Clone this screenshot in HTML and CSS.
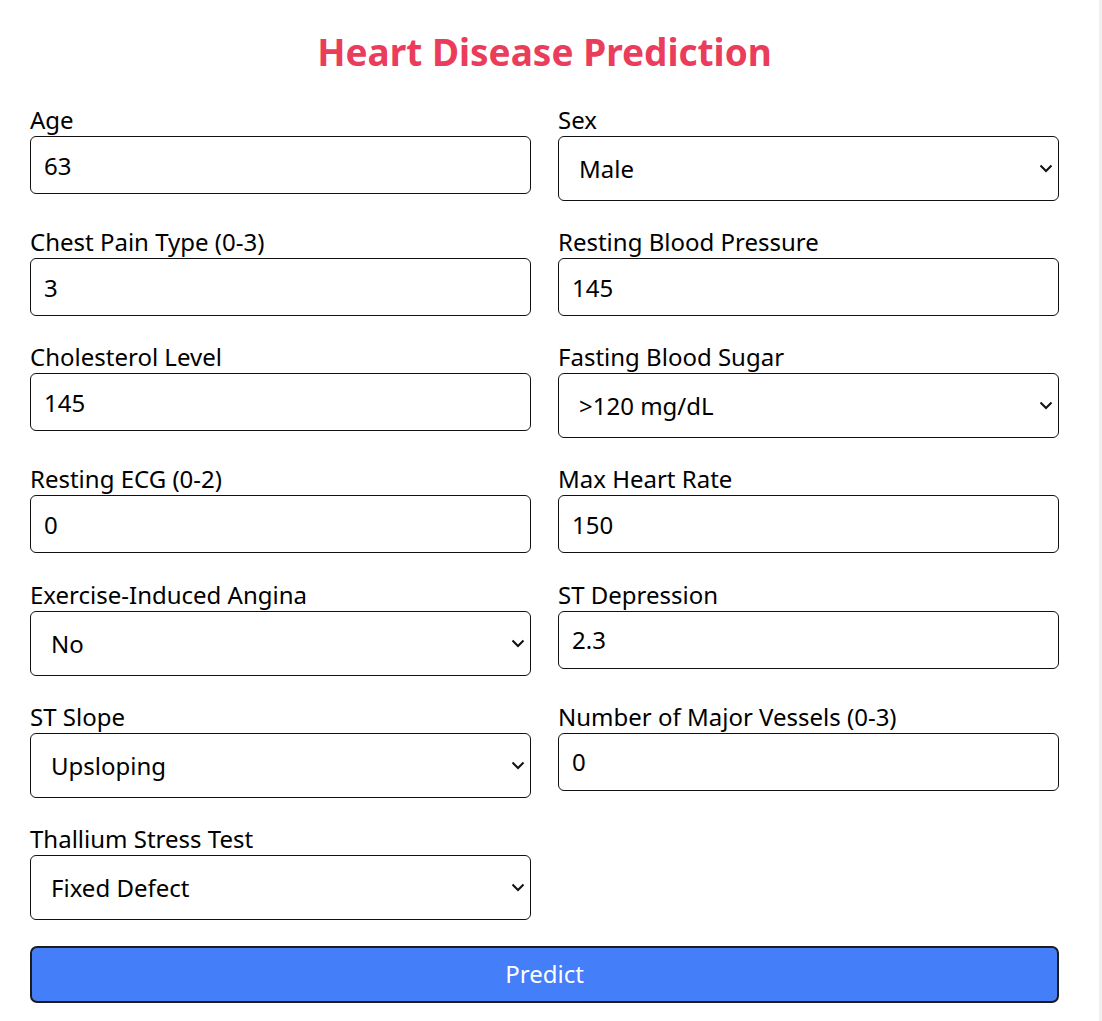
FILE: index.html
```html
<!DOCTYPE html>
<html lang="en">
<head>
<meta charset="utf-8">
<title>Heart Disease Prediction</title>
<link rel="stylesheet" href="styles.css">
</head>
<body>
<div class="page">
  <main class="content">
    <h1 class="title">Heart Disease Prediction</h1>
    <form class="form">
      <div class="field">
        <label class="label">Age</label>
        <input class="input" type="text" value="63">
      </div>
      <div class="field">
        <label class="label">Sex</label>
        <div class="select-wrap">
          <select class="select"><option>Male</option><option>Female</option></select>
          <svg class="chev" width="14" height="9" viewBox="0 0 14 9"><path d="M1.5 1.5 L7 7 L12.5 1.5" fill="none" stroke="#111" stroke-width="2"/></svg>
        </div>
      </div>
      <div class="field">
        <label class="label">Chest Pain Type (0-3)</label>
        <input class="input" type="text" value="3">
      </div>
      <div class="field">
        <label class="label">Resting Blood Pressure</label>
        <input class="input" type="text" value="145">
      </div>
      <div class="field">
        <label class="label">Cholesterol Level</label>
        <input class="input" type="text" value="145">
      </div>
      <div class="field">
        <label class="label">Fasting Blood Sugar</label>
        <div class="select-wrap">
          <select class="select"><option>&gt;120 mg/dL</option><option>&lt;=120 mg/dL</option></select>
          <svg class="chev" width="14" height="9" viewBox="0 0 14 9"><path d="M1.5 1.5 L7 7 L12.5 1.5" fill="none" stroke="#111" stroke-width="2"/></svg>
        </div>
      </div>
      <div class="field">
        <label class="label">Resting ECG (0-2)</label>
        <input class="input" type="text" value="0">
      </div>
      <div class="field">
        <label class="label">Max Heart Rate</label>
        <input class="input" type="text" value="150">
      </div>
      <div class="field">
        <label class="label">Exercise-Induced Angina</label>
        <div class="select-wrap">
          <select class="select"><option>No</option><option>Yes</option></select>
          <svg class="chev" width="14" height="9" viewBox="0 0 14 9"><path d="M1.5 1.5 L7 7 L12.5 1.5" fill="none" stroke="#111" stroke-width="2"/></svg>
        </div>
      </div>
      <div class="field">
        <label class="label">ST Depression</label>
        <input class="input" type="text" value="2.3">
      </div>
      <div class="field">
        <label class="label">ST Slope</label>
        <div class="select-wrap">
          <select class="select"><option>Upsloping</option><option>Flat</option><option>Downsloping</option></select>
          <svg class="chev" width="14" height="9" viewBox="0 0 14 9"><path d="M1.5 1.5 L7 7 L12.5 1.5" fill="none" stroke="#111" stroke-width="2"/></svg>
        </div>
      </div>
      <div class="field">
        <label class="label">Number of Major Vessels (0-3)</label>
        <input class="input" type="text" value="0">
      </div>
      <div class="field">
        <label class="label">Thallium Stress Test</label>
        <div class="select-wrap">
          <select class="select"><option>Fixed Defect</option><option>Normal</option><option>Reversible Defect</option></select>
          <svg class="chev" width="14" height="9" viewBox="0 0 14 9"><path d="M1.5 1.5 L7 7 L12.5 1.5" fill="none" stroke="#111" stroke-width="2"/></svg>
        </div>
      </div>
      <button class="btn" type="button">Predict</button>
    </form>
  </main>
</div>
</body>
</html>
```
FILE: styles.css
```css
html, body {
  margin: 0;
  padding: 0;
}
body {
  background: #f0f0f0;
  font-family: "Noto Sans", "Open Sans", sans-serif;
  color: #000;
}
.page {
  width: 1099px;
  min-height: 100vh;
  background: #fff;
}
.content {
  padding: 25px 40px 20px 30px;
}
.title {
  margin: 0 0 26px;
  text-align: center;
  font-size: 37px;
  line-height: 53px;
  font-weight: 700;
  color: #ea3d5b;
}
.form {
  display: grid;
  grid-template-columns: 501px 501px;
  column-gap: 27px;
  row-gap: 25.15px;
  align-items: start;
}
.field {
  display: flex;
  flex-direction: column;
}
.label {
  font-size: 24px;
  line-height: 32px;
  height: 32px;
}
.input {
  box-sizing: border-box;
  height: 58px;
  padding: 12px 13px;
  border: 1px solid #111;
  border-radius: 6px;
  font: inherit;
  font-size: 24px;
  line-height: 32px;
  color: #000;
  background: #fff;
  outline: none;
}
.select-wrap {
  position: relative;
  height: 65px;
}
.select {
  box-sizing: border-box;
  width: 100%;
  height: 65px;
  padding: 0 40px 0 20px;
  border: 1px solid #111;
  border-radius: 6px;
  font: inherit;
  font-size: 24px;
  color: #000;
  background: #fff;
  -webkit-appearance: none;
  appearance: none;
  outline: none;
}
.chev {
  position: absolute;
  right: 6px;
  top: 28px;
  pointer-events: none;
}
.btn {
  grid-column: 1 / -1;
  margin-top: 1px;
  height: 57px;
  border: 2px solid #1c1c1c;
  border-radius: 7px;
  background: #457ef9;
  color: #fff;
  font: inherit;
  font-size: 24px;
  line-height: 32px;
  cursor: pointer;
}
```
